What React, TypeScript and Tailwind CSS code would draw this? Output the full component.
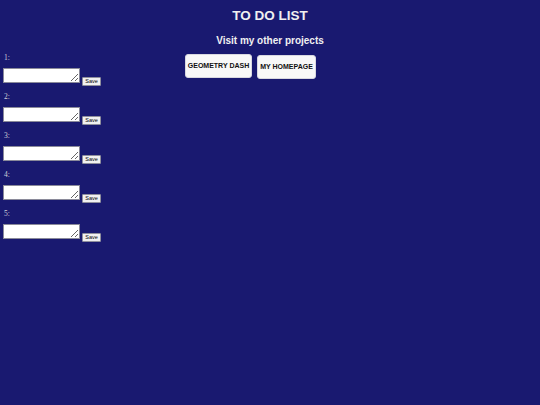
import React from "react";

const items = [1, 2, 3, 4, 5];

export default function App() {
  return (
    <main className="w-[540px] h-[405px] bg-[#191970] overflow-hidden font-['Liberation_Sans',Arial,sans-serif]">
      {/* header */}
      <header className="text-center text-[#f0f0f0] font-bold pt-[8px]">
        <h1 className="text-[13.5px] leading-[16px]">TO DO LIST</h1>
        <h2 className="text-[10px] leading-[12px] mt-[11px]">Visit my other projects</h2>
      </header>

      <div className="flex mt-[7px]">
        {/* list */}
        <ul className="pl-[4px] w-[185px] font-['Liberation_Serif','Times_New_Roman',serif]">
          {items.map((n) => (
            <li key={n} className="h-[39px]">
              <div className="text-[7.5px] leading-[8px] h-[14px] text-[#d0d0d8]">{n}:</div>
              <div className="flex items-end gap-[2px] -ml-[1px]">
                <textarea className="w-[77px] h-[15px] bg-white border border-[#8a8a9a] block p-0 text-[7px]" />
                <button className="h-[9px] w-[19px] bg-[#f0f0f0] border border-[#8f8f9d] rounded-[1px] text-[5.5px] leading-none text-black font-['Liberation_Sans',Arial,sans-serif] mb-[-3px]">
                  Save
                </button>
              </div>
            </li>
          ))}
        </ul>

        {/* project links */}
        <div className="flex items-start gap-[5px]">
          <a className="w-[67px] h-[24px] bg-[#f8f8f8] rounded-[3px] border border-[#d8d8e0] flex items-center justify-center text-[7px] font-bold text-[#111] whitespace-nowrap">
            GEOMETRY DASH
          </a>
          <a className="w-[59px] h-[24px] mt-[1px] bg-[#f8f8f8] rounded-[3px] border border-[#d8d8e0] flex items-center justify-center text-[7px] font-bold text-[#111] whitespace-nowrap">
            MY HOMEPAGE
          </a>
        </div>
      </div>
    </main>
  );
}
